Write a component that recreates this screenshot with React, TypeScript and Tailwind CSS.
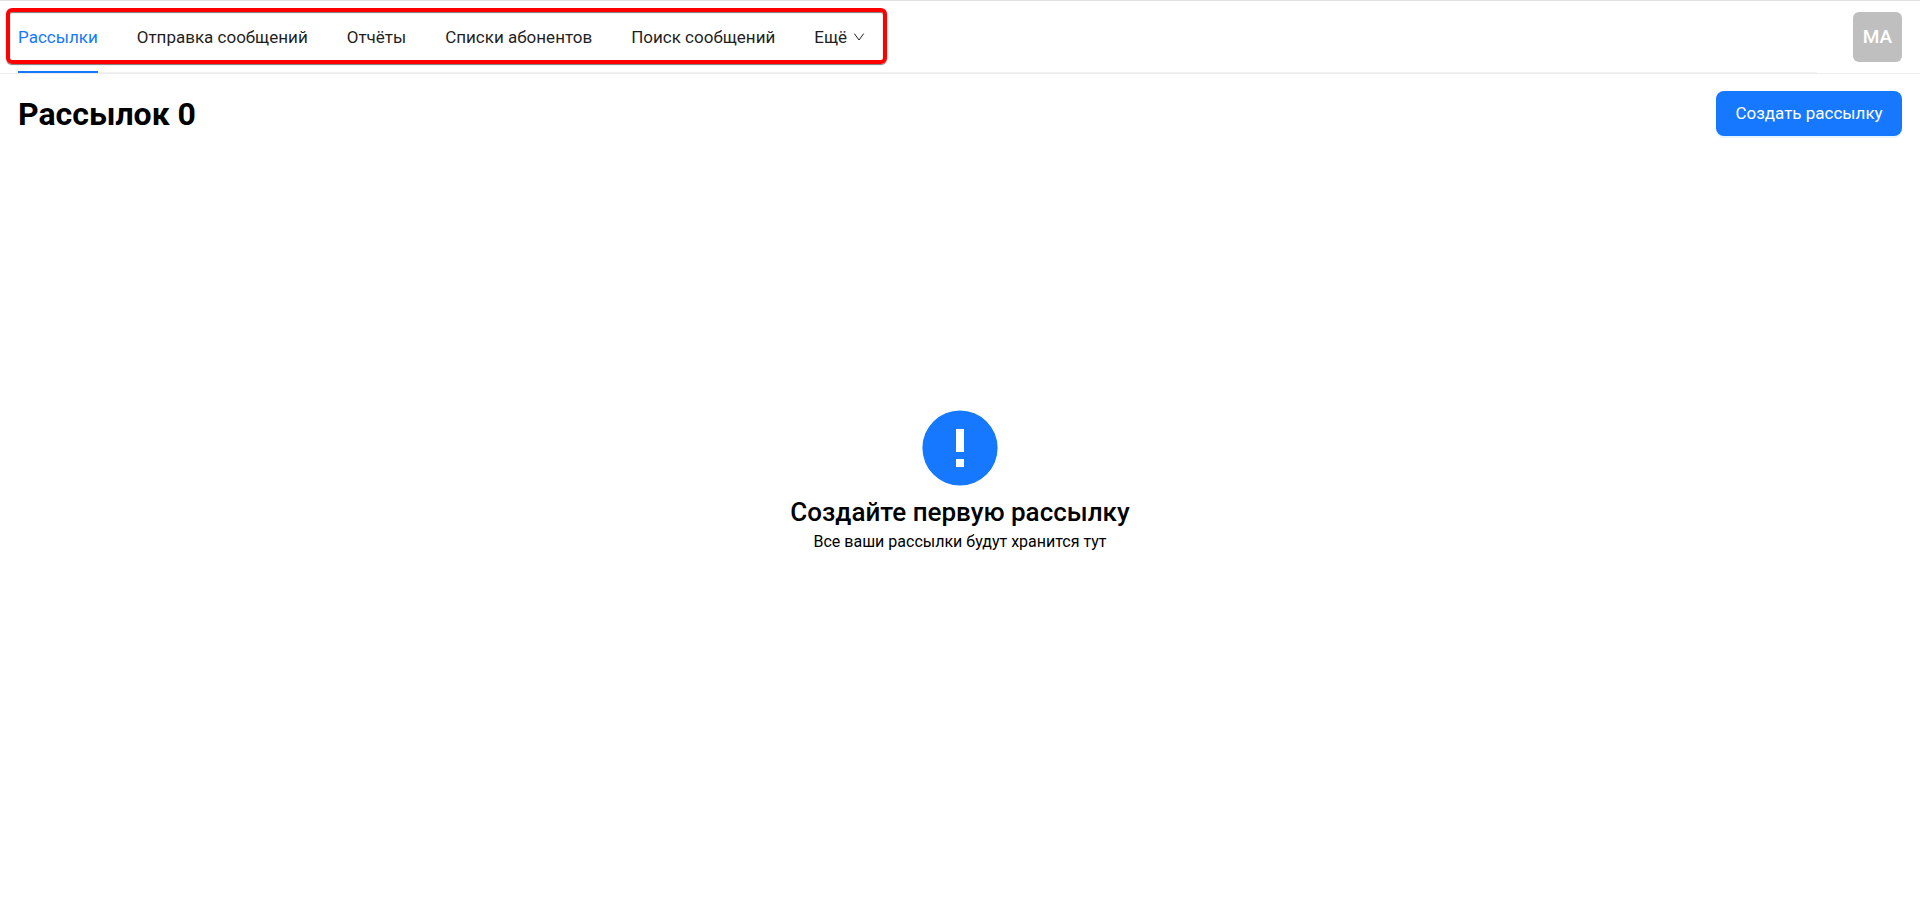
const tabs = [
  "Рассылки",
  "Отправка сообщений",
  "Отчёты",
  "Списки абонентов",
  "Поиск сообщений",
];

function Header() {
  return (
    <header className="flex h-[74px] items-stretch justify-between border-y border-t-[#e0e0e0] border-b-[#ececec] px-[18px]">
      <nav
        aria-label="Разделы"
        className="relative flex grow gap-[39px] border-b border-[#f0f0f0] pt-[3px] text-[17px] whitespace-nowrap text-[#1f1f1f]"
      >
        {tabs.map((tab, i) => (
          <a
            key={tab}
            href="#"
            aria-current={i === 0 ? "page" : undefined}
            className={
              i === 0
                ? "relative flex items-center text-[#1677ff] after:absolute after:inset-x-0 after:-bottom-px after:h-[2px] after:bg-[#1677ff]"
                : "flex items-center"
            }
          >
            {tab}
          </a>
        ))}
        <button type="button" className="flex items-center gap-1.5">
          Ещё
          <svg viewBox="0 0 12 12" className="size-3" fill="none" stroke="currentColor" aria-hidden="true">
            <path d="M1.3 1.6 6 8l4.7-6.4" />
          </svg>
        </button>
        <span className="pointer-events-none absolute top-[7px] -left-3 h-[56px] w-[881px] rounded-md border-4 border-[#ff0000] shadow-[0_1px_1px_#777,inset_0_1px_1px_#777]" />
      </nav>
      <button
        type="button"
        className="ml-9 h-[50px] w-[49px] shrink-0 self-center rounded-md bg-[#bfbfbf] text-[19px] font-medium text-white"
      >
        МА
      </button>
    </header>
  );
}

export default function App() {
  return (
    <div className="flex min-h-screen flex-col bg-white font-['Roboto',sans-serif] text-black">
      <Header />
      <main className="flex grow flex-col px-[18px] pt-[17px]">
        <div className="flex items-center justify-between">
          <h1 className="text-[32px] leading-[47px] font-bold">Рассылок 0</h1>
          <button
            type="button"
            className="h-[45px] w-[186px] self-start rounded-lg bg-[#1677ff] text-[17px] text-white shadow-[0_2px_0_#e6f4ff]"
          >
            Создать рассылку
          </button>
        </div>
        <section className="flex flex-col items-center pt-[272px] text-center">
          <svg viewBox="0 0 76 76" className="size-[76px]" aria-hidden="true">
            <circle cx="38" cy="38" r="37.6" fill="#1677ff" />
            <path fill="#fff" d="M34 19h8v23h-8zM34 49h8v8h-8z" />
          </svg>
          <h2 className="mt-2.5 text-[26px] leading-8 font-medium">Создайте первую рассылку</h2>
          <p className="mt-0.5 text-base leading-6">Все ваши рассылки будут хранится тут</p>
        </section>
      </main>
    </div>
  );
}
